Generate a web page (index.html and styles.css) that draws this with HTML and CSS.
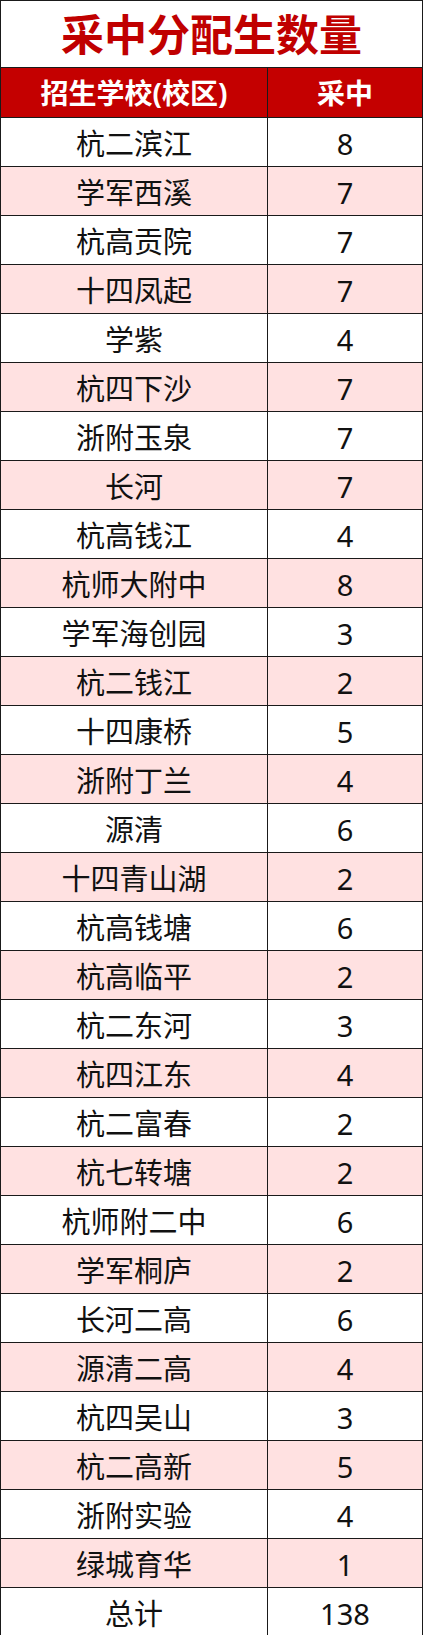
FILE: index.html
```html
<!DOCTYPE html>
<html lang="zh-CN">
<head>
<meta charset="utf-8">
<title>采中分配生数量</title>
<link rel="stylesheet" href="styles.css">
</head>
<body>
<table class="sheet">
  <colgroup><col class="c-school"><col class="c-num"></colgroup>
  <thead>
    <tr class="title-row"><th colspan="2" class="title">采中分配生数量</th></tr>
    <tr class="head-row"><th>招生学校(校区)</th><th>采中</th></tr>
  </thead>
  <tbody>
    <tr><td>杭二滨江</td><td>8</td></tr>
    <tr class="alt"><td>学军西溪</td><td>7</td></tr>
    <tr><td>杭高贡院</td><td>7</td></tr>
    <tr class="alt"><td>十四凤起</td><td>7</td></tr>
    <tr><td>学紫</td><td>4</td></tr>
    <tr class="alt"><td>杭四下沙</td><td>7</td></tr>
    <tr><td>浙附玉泉</td><td>7</td></tr>
    <tr class="alt"><td>长河</td><td>7</td></tr>
    <tr><td>杭高钱江</td><td>4</td></tr>
    <tr class="alt"><td>杭师大附中</td><td>8</td></tr>
    <tr><td>学军海创园</td><td>3</td></tr>
    <tr class="alt"><td>杭二钱江</td><td>2</td></tr>
    <tr><td>十四康桥</td><td>5</td></tr>
    <tr class="alt"><td>浙附丁兰</td><td>4</td></tr>
    <tr><td>源清</td><td>6</td></tr>
    <tr class="alt"><td>十四青山湖</td><td>2</td></tr>
    <tr><td>杭高钱塘</td><td>6</td></tr>
    <tr class="alt"><td>杭高临平</td><td>2</td></tr>
    <tr><td>杭二东河</td><td>3</td></tr>
    <tr class="alt"><td>杭四江东</td><td>4</td></tr>
    <tr><td>杭二富春</td><td>2</td></tr>
    <tr class="alt"><td>杭七转塘</td><td>2</td></tr>
    <tr><td>杭师附二中</td><td>6</td></tr>
    <tr class="alt"><td>学军桐庐</td><td>2</td></tr>
    <tr><td>长河二高</td><td>6</td></tr>
    <tr class="alt"><td>源清二高</td><td>4</td></tr>
    <tr><td>杭四吴山</td><td>3</td></tr>
    <tr class="alt"><td>杭二高新</td><td>5</td></tr>
    <tr><td>浙附实验</td><td>4</td></tr>
    <tr class="alt"><td>绿城育华</td><td>1</td></tr>
    <tr><td>总计</td><td>138</td></tr>
  </tbody>
</table>
</body>
</html>
```
FILE: styles.css
```css
html, body {
  margin: 0;
  padding: 0;
  background: #ffffff;
}
.sheet {
  width: 422px;
  border-collapse: collapse;
  table-layout: fixed;
  font-family: "Noto Sans", "Noto Sans CJK SC", sans-serif;
  color: #111111;
}
.c-school { width: 267px; }
.c-num { width: 155px; }
.sheet th,
.sheet td {
  border: 1.5px solid #1a1a1a;
  text-align: center;
  padding: 0;
  line-height: 1;
}
.title-row th {
  height: 66px;
  font-size: 43px;
  font-weight: 700;
  color: #c00000;
  background: #ffffff;
  letter-spacing: 0;
}
.head-row th {
  height: 49px;
  background: #c40000;
  color: #ffffff;
  font-size: 28px;
  font-weight: 700;
}
.sheet td {
  height: 46px;
  font-size: 29px;
  font-weight: 400;
  padding-top: 2px;
}
.sheet tr.alt td {
  background: #ffe1e1;
}
```
